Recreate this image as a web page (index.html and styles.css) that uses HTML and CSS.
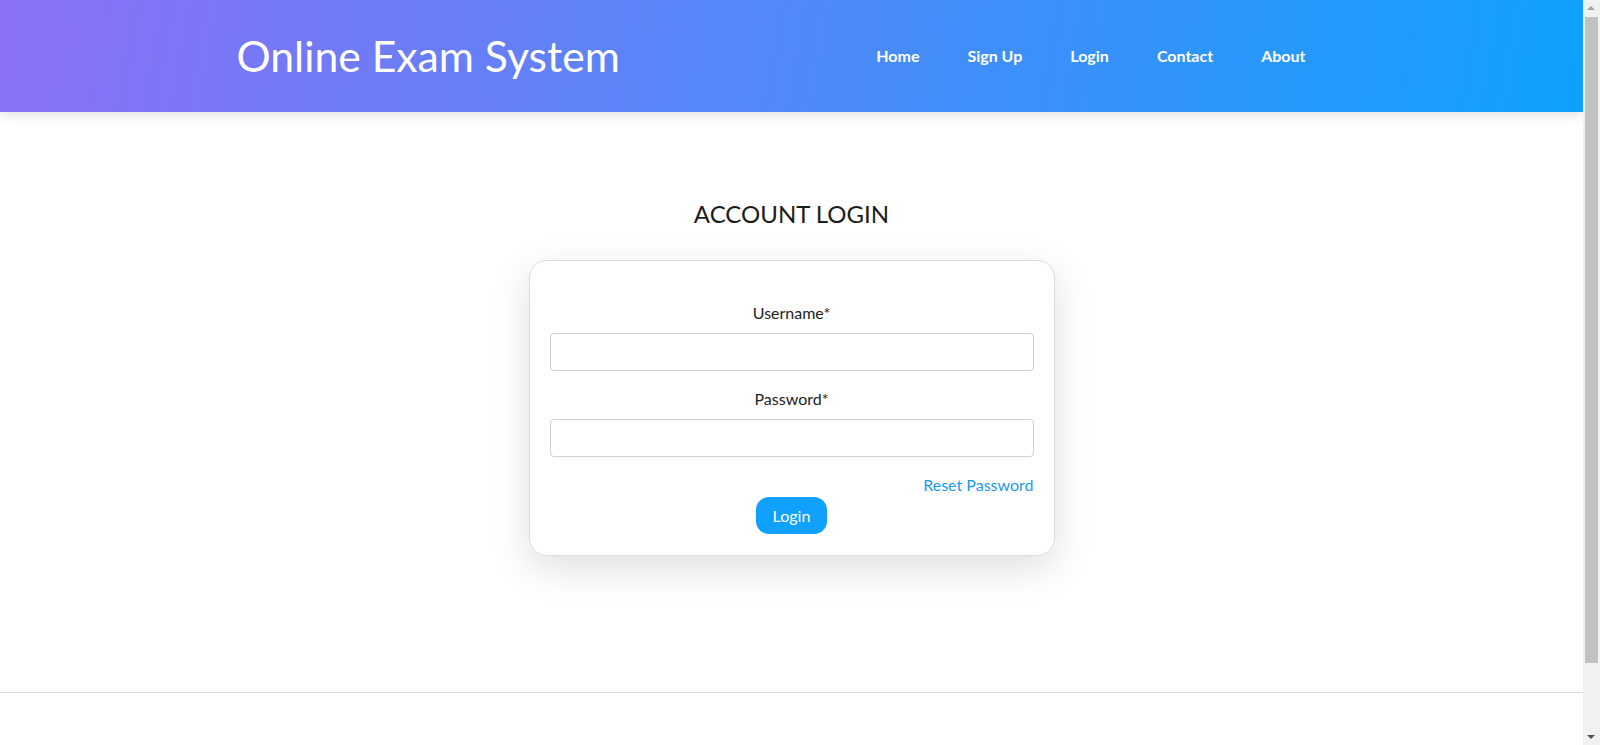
FILE: index.html
```html
<!DOCTYPE html>
<html lang="en">
<head>
<meta charset="utf-8">
<title>Online Exam System - Login</title>
<link rel="stylesheet" href="styles.css">
</head>
<body>
<header class="site-header">
  <div class="container header-inner">
    <div class="brand">Online Exam System</div>
    <nav class="main-nav">
      <a href="#">Home</a>
      <a href="#">Sign Up</a>
      <a href="#">Login</a>
      <a href="#">Contact</a>
      <a href="#">About</a>
    </nav>
  </div>
</header>
<main class="content">
  <h1 class="page-title">ACCOUNT LOGIN</h1>
  <form class="login-card">
    <label class="field-label" for="username">Username*</label>
    <input class="field-input" id="username" type="text">
    <label class="field-label" for="password">Password*</label>
    <input class="field-input" id="password" type="password">
    <div class="reset-row"><a href="#" class="reset-link">Reset Password</a></div>
    <div class="btn-row"><button type="button" class="btn-login">Login</button></div>
  </form>
</main>
<footer class="site-footer"></footer>
<div class="scrollbar" aria-hidden="true">
  <span class="sb-arrow sb-up"></span>
  <span class="sb-thumb"></span>
  <span class="sb-arrow sb-down"></span>
</div>
</body>
</html>
```

FILE: styles.css
```css
* { box-sizing: border-box; }

html, body {
  margin: 0;
  padding: 0;
}

body {
  font-family: Lato, "Open Sans", "Liberation Sans", sans-serif;
  color: #212121;
  background: #fff;
  margin-right: 17px;
}

.site-header {
  height: 112px;
  background: linear-gradient(100deg, #8a70f5 0%, #5686f7 45%, #0ea1ff 100%);
  box-shadow: 0 3px 12px rgba(0, 0, 0, 0.12);
  position: relative;
  z-index: 1;
}

.container {
  max-width: 1140px;
  margin: 0 auto;
  padding: 0 15px;
}

.header-inner {
  height: 112px;
  display: flex;
  align-items: center;
}

.brand {
  color: #fff;
  font-size: 42.7px;
  font-weight: 400;
  line-height: 1;
}

.main-nav {
  margin-left: auto;
  margin-right: 17px;
  display: flex;
  align-items: center;
}

.main-nav a {
  color: #fff;
  text-decoration: none;
  font-weight: 700;
  font-size: 16px;
  padding: 0 24px;
  line-height: 24px;
}

.content {
  min-height: 580px;
  padding-top: 86px;
  display: flex;
  flex-direction: column;
  align-items: center;
}

.page-title {
  margin: 0;
  font-size: 24px;
  font-weight: 400;
  line-height: 32px;
  color: #1c1c1c;
}

.login-card {
  margin-top: 30px;
  width: 526px;
  background: #fff;
  border: 1px solid #dcdcdc;
  border-radius: 18px;
  box-shadow: 0 12px 40px rgba(0, 0, 0, 0.13);
  padding: 20px 20px 21px;
  display: flex;
  flex-direction: column;
}

.field-label {
  display: block;
  text-align: center;
  font-size: 16px;
  line-height: 24px;
  color: #222;
  margin-top: 20px;
  margin-bottom: 8px;
}

.field-label + .field-input + .field-label {
  margin-top: 16px;
}

.field-input {
  display: block;
  width: 100%;
  height: 38px;
  border: 1px solid #cfd0d4;
  border-radius: 4px;
  font-family: inherit;
  font-size: 16px;
  padding: 6px 12px;
  background: #fff;
}

.reset-row {
  margin-top: 16px;
  text-align: right;
  line-height: 24px;
}

.reset-link {
  color: #1a9af5;
  text-decoration: none;
  font-size: 16px;
}

.btn-row {
  display: flex;
  justify-content: center;
}

.btn-login {
  height: 37px;
  padding: 0 17px;
  border: none;
  border-radius: 13px;
  background: #10a0fd;
  color: #fff;
  font-family: inherit;
  font-size: 16px;
  line-height: 24px;
  cursor: pointer;
}

.site-footer {
  border-top: 1px solid #dcdcdc;
  height: 130px;
}

/* emulated browser scrollbar */
.scrollbar {
  position: fixed;
  top: 0;
  right: 0;
  width: 17px;
  height: 100vh;
  background: #f1f1f1;
  z-index: 10;
}

.sb-thumb {
  position: absolute;
  left: 2px;
  right: 2px;
  top: 17px;
  height: 646px;
  background: #c1c1c1;
}

.sb-arrow {
  position: absolute;
  left: 4px;
  width: 0;
  height: 0;
  border-left: 4.5px solid transparent;
  border-right: 4.5px solid transparent;
}

.sb-up {
  top: 6px;
  border-bottom: 4.5px solid #a3a3a3;
}

.sb-down {
  bottom: 6px;
  border-top: 4.5px solid #505050;
}
```
